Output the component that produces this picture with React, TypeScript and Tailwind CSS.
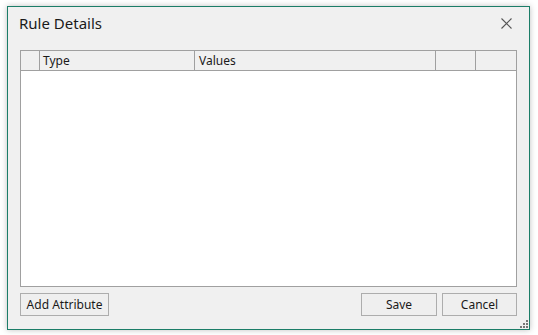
export default function App() {
  const font = { fontFamily: '"Segoe UI", "Noto Sans", sans-serif' };
  return (
    <div className="w-[538px] h-[335px] bg-white pl-[7px] pt-[6px]" style={font}>
      <div className="w-[523px] h-[324px] border border-[#1b7d68] bg-[#f0f0f0] shadow-[0_0_6px_rgba(0,0,0,0.25)] flex flex-col relative">
        {/* Title bar */}
        <div className="h-[43px] flex items-start justify-between pl-[11px] pr-[17px] pt-[5px]">
          <span className="text-[15px] leading-[22px] text-[#1a1a1a]">Rule Details</span>
          <svg width="11" height="11" viewBox="0 0 11 11" className="mt-[6px]">
            <path d="M0.5 0.5 L10.5 10.5 M10.5 0.5 L0.5 10.5" stroke="#555" strokeWidth="1.1" />
          </svg>
        </div>

        {/* Table */}
        <div className="mx-[12px] h-[237px] border border-[#a0a0a0] bg-white flex flex-col">
          <div className="h-[20px] flex bg-[#f0f0f0] border-b border-[#a0a0a0] text-[12px] text-[#1a1a1a]">
            <div className="w-[19px] border-r border-[#a0a0a0]" />
            <div className="w-[155px] border-r border-[#a0a0a0] pl-[3px] leading-[19px]">Type</div>
            <div className="w-[241px] border-r border-[#a0a0a0] pl-[4px] leading-[19px]">Values</div>
            <div className="w-[40px] border-r border-[#a0a0a0]" />
            <div className="flex-1" />
          </div>
          <div className="flex-1" />
        </div>

        {/* Buttons */}
        <div className="flex justify-between mx-[12px] mt-[6px] text-[12px] text-[#1a1a1a]">
          <button className="w-[89px] h-[23px] border border-[#adadad] bg-[#efefef]">Add Attribute</button>
          <div className="flex gap-[5px]">
            <button className="w-[76px] h-[23px] border border-[#adadad] bg-[#efefef]">Save</button>
            <button className="w-[75px] h-[23px] border border-[#adadad] bg-[#efefef]">Cancel</button>
          </div>
        </div>

        {/* Resize grip */}
        <svg width="8" height="8" viewBox="0 0 8 8" className="absolute right-[1px] bottom-[1px]">
          <rect x="6" y="0" width="2" height="2" fill="#777" />
          <rect x="3" y="3" width="2" height="2" fill="#777" />
          <rect x="6" y="3" width="2" height="2" fill="#777" />
          <rect x="0" y="6" width="2" height="2" fill="#777" />
          <rect x="3" y="6" width="2" height="2" fill="#777" />
          <rect x="6" y="6" width="2" height="2" fill="#777" />
        </svg>
      </div>
    </div>
  );
}
